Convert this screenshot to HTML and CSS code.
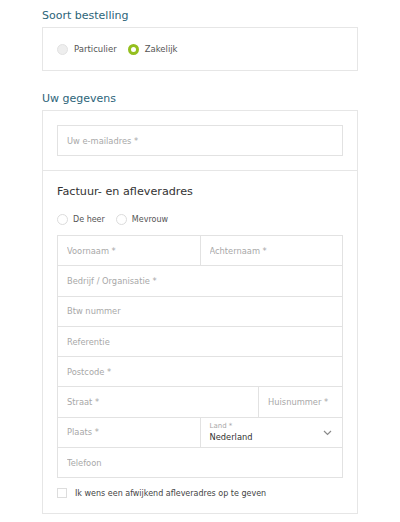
FILE: index.html
```html
<!DOCTYPE html>
<html lang="nl">
<head>
    <meta charset="UTF-8">
    <meta name="viewport" content="width=device-width, initial-scale=1.0">
    <title>Bestelling</title>
    <link rel="stylesheet" href="styles.css">
</head>
<body>
    <div class="checkout">
        <h2 class="section-title">Soort bestelling</h2>
        <div class="panel panel-type">
            <label class="choice">
                <input type="radio" name="type" value="particulier">
                <span>Particulier</span>
            </label>
            <label class="choice">
                <input type="radio" name="type" value="zakelijk" class="green" checked>
                <span>Zakelijk</span>
            </label>
        </div>

        <h2 class="section-title">Uw gegevens</h2>
        <div class="panel">
            <div class="panel-block block-email">
                <div class="field field-single">
                    <input type="email" placeholder="Uw e-mailadres *">
                </div>
            </div>
            <div class="panel-block block-address">
                <h3 class="sub-title">Factuur- en afleveradres</h3>
                <div class="salutation">
                    <label class="choice">
                        <input type="radio" name="aanhef" value="heer" class="plain">
                        <span>De heer</span>
                    </label>
                    <label class="choice">
                        <input type="radio" name="aanhef" value="mevrouw" class="plain">
                        <span>Mevrouw</span>
                    </label>
                </div>

                <div class="field-grid">
                    <div class="row">
                        <div class="field half"><input type="text" placeholder="Voornaam *"></div>
                        <div class="field half"><input type="text" placeholder="Achternaam *"></div>
                    </div>
                    <div class="row">
                        <div class="field"><input type="text" placeholder="Bedrijf / Organisatie *"></div>
                    </div>
                    <div class="row">
                        <div class="field"><input type="text" placeholder="Btw nummer"></div>
                    </div>
                    <div class="row">
                        <div class="field"><input type="text" placeholder="Referentie"></div>
                    </div>
                    <div class="row">
                        <div class="field"><input type="text" placeholder="Postcode *"></div>
                    </div>
                    <div class="row">
                        <div class="field street"><input type="text" placeholder="Straat *"></div>
                        <div class="field number"><input type="text" placeholder="Huisnummer *"></div>
                    </div>
                    <div class="row">
                        <div class="field half"><input type="text" placeholder="Plaats *"></div>
                        <div class="field half field-select">
                            <span class="select-label">Land *</span>
                            <span class="select-value">Nederland</span>
                            <svg class="chevron" width="9" height="6" viewBox="0 0 9 6">
                                <path d="M1 1 L4.5 4.5 L8 1" fill="none" stroke="#8a8a8a" stroke-width="1.2"/>
                            </svg>
                        </div>
                    </div>
                    <div class="row">
                        <div class="field"><input type="tel" placeholder="Telefoon"></div>
                    </div>
                </div>

                <label class="check">
                    <input type="checkbox">
                    <span>Ik wens een afwijkend afleveradres op te geven</span>
                </label>
            </div>
        </div>
    </div>
</body>
</html>
```

FILE: styles.css
```css
body {
    font-family: "DejaVu Sans", Verdana, sans-serif;
    background-color: #fff;
    color: #444;
    margin: 0;
}

.checkout {
    padding: 8px 42px 0;
}

.section-title {
    font-size: 11px;
    font-weight: normal;
    color: #2c6479;
    margin: 0 0 3px;
    line-height: 16px;
}

.panel {
    border: 1px solid #e6e6e6;
    margin-bottom: 20px;
}

.panel-type {
    display: flex;
    gap: 11px;
    padding: 15px 14px;
    height: 12px;
    align-items: center;
}

.choice {
    display: flex;
    align-items: center;
    gap: 6px;
    font-size: 8.5px;
    color: #555;
    cursor: pointer;
}

.choice input {
    appearance: none;
    margin: 0;
    width: 11px;
    height: 11px;
    border-radius: 50%;
    border: 1px solid #e2e2e2;
    background: #eee;
}

.choice input.plain {
    background: #fff;
    border-color: #dcdcdc;
}

.choice input.green:checked {
    background: #fff;
    border: 3px solid #94bf1f;
}

.panel-block {
    padding: 15px 14px 15px;
}

.block-email {
    padding-top: 14px;
    padding-bottom: 14px;
    border-bottom: 1px solid #e6e6e6;
}

.field {
    border: 1px solid #e2e2e2;
    height: 29px;
    display: flex;
    align-items: center;
    box-sizing: border-box;
}

.field-single {
    height: 31px;
}

.field input {
    border: none;
    outline: none;
    width: 100%;
    padding: 0 9px;
    font-family: inherit;
    font-size: 8.3px;
    color: #444;
    background: transparent;
}

.field input::placeholder {
    color: #a8a8a8;
}

.sub-title {
    font-size: 11.2px;
    font-weight: normal;
    color: #333;
    margin: 0 0 16px;
    line-height: 12px;
}

.salutation {
    display: flex;
    gap: 11px;
    margin-bottom: 10px;
}

.salutation .choice {
    font-size: 8px;
    gap: 5px;
}

.field-grid {
    border-top: 1px solid #e2e2e2;
    border-left: 1px solid #e2e2e2;
}

.row {
    display: flex;
}

.row .field {
    flex: 1;
    border-top: none;
    border-left: none;
    height: 30.3px;
}

.row .field.half {
    flex: 0 0 50%;
    box-sizing: border-box;
}

.row .field.street {
    flex: 0 0 201px;
}

.field-select {
    position: relative;
    flex-direction: column;
    align-items: flex-start;
    justify-content: center;
    padding-left: 9px;
}

.select-label {
    font-size: 7px;
    color: #a8a8a8;
    line-height: 10px;
}

.select-value {
    font-size: 8.3px;
    color: #333;
    line-height: 12px;
}

.chevron {
    position: absolute;
    right: 10px;
    top: 12px;
}

.check {
    display: flex;
    align-items: center;
    gap: 8px;
    margin-top: 10px;
    font-size: 8px;
    color: #444;
    cursor: pointer;
}

.check input {
    appearance: none;
    margin: 0;
    width: 10px;
    height: 10px;
    border: 1px solid #ddd;
    background: #fff;
}
```
